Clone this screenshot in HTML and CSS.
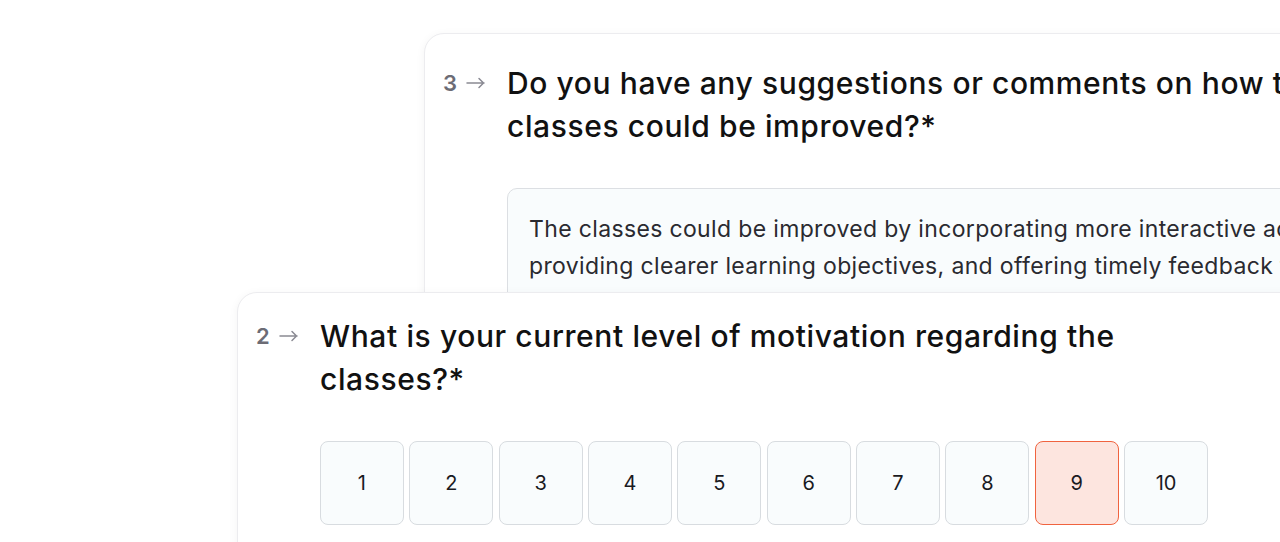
FILE: index.html
```html
<!DOCTYPE html>
<html>
<head>
<meta charset="utf-8">
<link rel="stylesheet" href="styles.css">
</head>
<body>
<div class="stage">
  <section class="card card-back">
    <div class="q">
      <div class="num">3 <svg class="arrow" width="20" height="12" viewBox="0 0 20 12"><path d="M1 6h17M13 1.5l4.5 4.5-4.5 4.5" fill="none" stroke="#8a8a93" stroke-width="1.5" stroke-linecap="round" stroke-linejoin="round"/></svg></div>
      <div class="body">
        <h2 class="title">Do you have any suggestions or comments on how the classes could be improved?*</h2>
        <div class="answer">The classes could be improved by incorporating more interactive activities, providing clearer learning objectives, and offering timely feedback to students.</div>
      </div>
    </div>
  </section>
  <section class="card card-front">
    <div class="q">
      <div class="num">2 <svg class="arrow" width="20" height="12" viewBox="0 0 20 12"><path d="M1 6h17M13 1.5l4.5 4.5-4.5 4.5" fill="none" stroke="#8a8a93" stroke-width="1.5" stroke-linecap="round" stroke-linejoin="round"/></svg></div>
      <div class="body">
        <h2 class="title">What is your current level of motivation regarding the classes?*</h2>
        <div class="scale">
          <div class="opt">1</div>
          <div class="opt">2</div>
          <div class="opt">3</div>
          <div class="opt">4</div>
          <div class="opt">5</div>
          <div class="opt">6</div>
          <div class="opt">7</div>
          <div class="opt">8</div>
          <div class="opt selected">9</div>
          <div class="opt">10</div>
        </div>
      </div>
    </div>
  </section>
</div>
</body>
</html>
```
FILE: styles.css
```css
* { box-sizing: border-box; }
html, body { margin: 0; padding: 0; background: #fff; }
body {
  width: 1280px;
  height: 542px;
  overflow: hidden;
  font-family: "Inter", "Liberation Sans", sans-serif;
  color: #111;
}
.stage {
  position: relative;
  width: 1280px;
  height: 542px;
  overflow: hidden;
}
.card {
  position: absolute;
  background: #fff;
  border: 1px solid #ececef;
  border-radius: 20px;
  box-shadow: 0 2px 10px rgba(0, 0, 0, 0.05);
  width: 1100px;
  height: 520px;
}
.card-back { left: 424px; top: 33px; padding: 28px 0 0 17px; }
.card-front { left: 237px; top: 292px; padding: 22px 0 0 17px; }
.q { display: flex; }
.num {
  width: 65px;
  flex: none;
  font-size: 22px;
  font-weight: 600;
  color: #6c6c75;
  line-height: 42px;
  display: flex;
  align-items: center;
  gap: 9px;
  height: 42px;
  padding-left: 1px;
}
.arrow { display: block; }
.body { flex: none; width: 888px; }
.title {
  margin: 0;
  font-size: 30px;
  font-weight: 500;
  line-height: 43px;
  letter-spacing: 0.6px;
  color: #111;
}
.answer {
  margin-top: 40px;
  border: 1px solid #dcdfe3;
  border-radius: 10px;
  background: #f9fcfd;
  padding: 22px 21px;
  font-size: 23px;
  line-height: 37px;
  color: #2a2a30;
  letter-spacing: 0.35px;
  width: 930px;
  height: 200px;
}
.scale {
  margin-top: 40px;
  display: grid;
  grid-template-columns: repeat(10, 1fr);
  gap: 5.5px;
}
.opt {
  height: 84px;
  border: 1px solid #d8dce0;
  border-radius: 8px;
  background: #f9fcfd;
  display: flex;
  align-items: center;
  justify-content: center;
  font-size: 20px;
  color: #1a1a1f;
}
.opt.selected {
  background: #fde5df;
  border-color: #f0633f;
}
```
